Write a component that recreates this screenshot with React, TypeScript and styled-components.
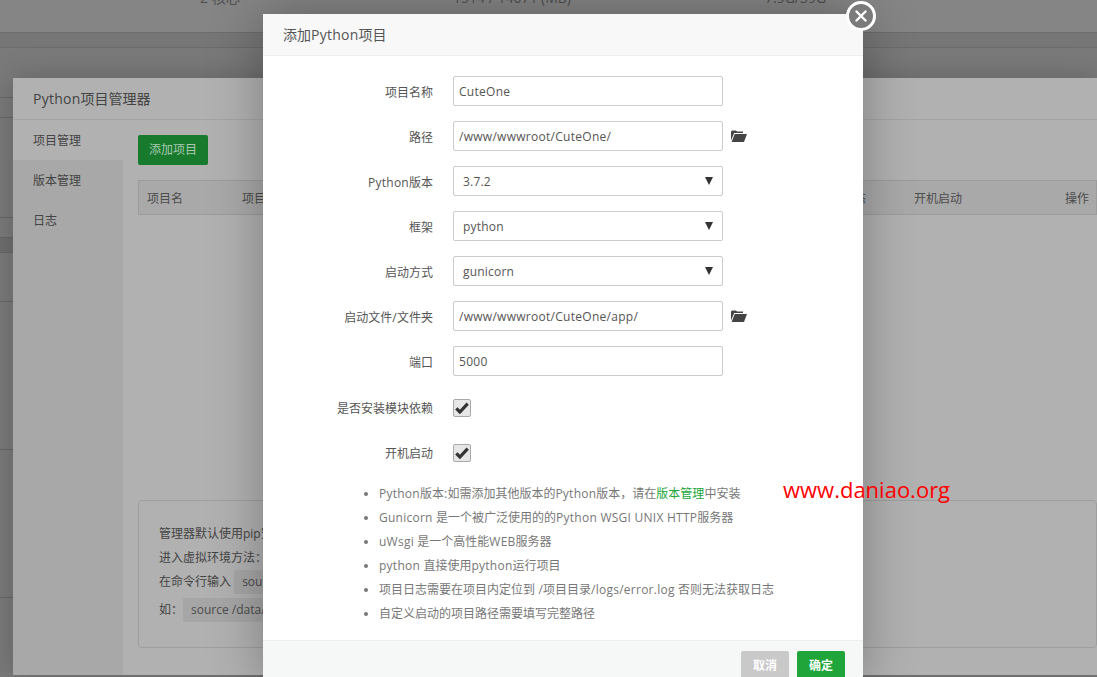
import React from 'react';
import styled, {createGlobalStyle} from 'styled-components';

const fontStack = '"Open Sans", "Noto Sans CJK SC", sans-serif';

const GlobalStyle = createGlobalStyle`
  html, body {
    margin: 0;
    height: 100%;
    overflow: hidden;
    background-color: #7a7a7a;
    font-family: ${fontStack};
    font-size: 12px;
    color: #555;
  }
  * {
    box-sizing: border-box;
  }
`;

const fields = [
  {label: '项目名称', value: 'CuteOne', kind: 'input'},
  {label: '路径', value: '/www/wwwroot/CuteOne/', kind: 'folder'},
  {label: 'Python版本', value: '3.7.2', kind: 'select'},
  {label: '框架', value: 'python', kind: 'select'},
  {label: '启动方式', value: 'gunicorn', kind: 'select'},
  {label: '启动文件/文件夹', value: '/www/wwwroot/CuteOne/app/', kind: 'folder'},
  {label: '端口', value: '5000', kind: 'input'},
];

const tips = [
  'Gunicorn 是一个被广泛使用的的Python WSGI UNIX HTTP服务器',
  'uWsgi 是一个高性能WEB服务器',
  'python 直接使用python运行项目',
  '项目日志需要在项目内定位到 /项目目录/logs/error.log 否则无法获取日志',
  '自定义启动的项目路径需要填写完整路径',
];

// heights of the rows of the page behind the manager window
const backRows = [
  {height: 50, dark: false},
  {height: 20, dark: false},
  {height: 100, dark: false},
  {height: 20, dark: false},
  {height: 15, dark: true},
  {height: 49, dark: false},
  {height: 148, dark: false},
  {height: 148, dark: false},
];

// the latin letters in the reference run a little wider than the cjk text around them
const Mixed: React.FC<{text: string}> = ({text}) => (
  <>
    {text.split(/([\x20-\x7e]+)/).map((part, index) => (
      index % 2 === 1 ? <Latin key={index}>{part}</Latin> : part
    ))}
  </>
);

const FolderIcon = () => (
  <FolderSvg viewBox="0 0 16 12" width="16" height="12">
    <path d="M0 10.5V1.4L1 .4h4l1 1.1h6v1.6H3.2z" fill="#444"/>
    <path d="M3.7 4H16l-3 8H.6z" fill="#444"/>
  </FolderSvg>
);

const CheckBox = () => (
  <Check>
    <svg viewBox="0 0 14 12" width="14" height="12">
      <path d="M1.3 6.4l3.6 3.6L12.7 1.6" fill="none" stroke="#333" strokeWidth="3.2"/>
    </svg>
  </Check>
);

export default function App() {
  return (
    <Page>
      <GlobalStyle/>
      <StatsRow>
        <span>2 核心</span>
        <span>1514 / 14071 (MB)</span>
        <span>7.9G/39G</span>
      </StatsRow>
      <TopBand/>
      {backRows.map((row, index) => <BackRow key={index} rowHeight={row.height} dark={row.dark}/>)}
      <Manager>
        <ManagerTitle><Mixed text="Python项目管理器"/></ManagerTitle>
        <ManagerBody>
          <SideMenu>
            <SideItem active>项目管理</SideItem>
            <SideItem>版本管理</SideItem>
            <SideItem>日志</SideItem>
          </SideMenu>
          <ManagerMain>
            <AddButton>添加项目</AddButton>
            <TableHead>
              <span>项目名</span>
              <span>项目路径</span>
              <span>状态</span>
              <span>开机启动</span>
              <HeadAction>操作</HeadAction>
            </TableHead>
            <TableSpace/>
            <NoticeBox>
              <NoticeLine>管理器默认使用pip安装模块</NoticeLine>
              <NoticeLine>进入虚拟环境方法：</NoticeLine>
              <NoticeLine>在命令行输入&nbsp;<Code>source /data/venv/bin/activate</Code></NoticeLine>
              <NoticeLine>如：<Code>source /data/venv/bin/activate</Code></NoticeLine>
            </NoticeBox>
          </ManagerMain>
        </ManagerBody>
      </Manager>
      <Modal>
        <ModalTitle><Mixed text="添加Python项目"/></ModalTitle>
        <CloseButton>
          <svg viewBox="0 0 12 12" width="12" height="12">
            <path d="M1.5 1.5l9 9M10.5 1.5l-9 9" stroke="#fff" strokeWidth="2.4" strokeLinecap="round"/>
          </svg>
        </CloseButton>
        <ModalForm>
          {fields.map((field) => (
            <FormRow key={field.label}>
              <FormLabel><Mixed text={field.label}/></FormLabel>
              {field.kind === 'select' ? (
                <SelectBox>
                  {field.value}
                  <SelectArrow/>
                </SelectBox>
              ) : (
                <TextInput readOnly value={field.value}/>
              )}
              {field.kind === 'folder' && <FolderIcon/>}
            </FormRow>
          ))}
          <CheckRow>
            <FormLabel>是否安装模块依赖</FormLabel>
            <CheckBox/>
          </CheckRow>
          <CheckRow>
            <FormLabel>开机启动</FormLabel>
            <CheckBox/>
          </CheckRow>
          <TipList>
            <li><Mixed text="Python版本:如需添加其他版本的Python版本，请在"/><TipLink>版本管理</TipLink>中安装</li>
            {tips.map((tip) => <li key={tip}><Mixed text={tip}/></li>)}
          </TipList>
        </ModalForm>
        <ModalFooter>
          <FooterButton variant="cancel">取消</FooterButton>
          <FooterButton variant="ok">确定</FooterButton>
        </ModalFooter>
      </Modal>
      <Watermark>www.daniao.org</Watermark>
    </Page>
  );
}

const Latin = styled.span`
  letter-spacing: 0.25px;
`;

const Page = styled.div`
  width: 1097px;
  height: 677px;
  overflow: hidden;
  position: relative;
  background-color: #7a7a7a;
`;

const StatsRow = styled.div`
  height: 45px;
  margin-top: -12px;
  padding-left: 200px;
  display: grid;
  grid-template-columns: 253px 312px 1fr;
  background-color: #858585;
  border-bottom: 1px solid #6c6c6c;
  color: #4f4f4f;
  font-size: 14px;
  line-height: 20px;
`;

const TopBand = styled.div`
  height: 15px;
  background-color: #767676;
  border-bottom: 1px solid #6c6c6c;
`;

const BackRow = styled.div<{rowHeight: number; dark: boolean}>`
  height: ${(props) => props.rowHeight}px;
  background-color: ${(props) => props.dark ? '#6e6e6e' : 'transparent'};
  border-bottom: 1px solid #666;
`;

const Manager = styled.div`
  position: absolute;
  left: 13px;
  top: 78px;
  width: 1084px;
  height: 597px;
  background-color: #b1b1b1;
  box-shadow: 0 0 30px rgba(0, 0, 0, 0.2);
  display: flex;
  flex-direction: column;
`;

const ManagerTitle = styled.div`
  height: 42px;
  padding-left: 20px;
  line-height: 41px;
  font-size: 14px;
  color: #444;
  border-bottom: 1px solid #a4a4a4;
`;

const ManagerBody = styled.div`
  flex: 1;
  display: flex;
`;

const SideMenu = styled.div`
  width: 110px;
  background-color: #a8a8a8;
`;

const SideItem = styled.div<{active?: boolean}>`
  height: 40px;
  padding-left: 20px;
  line-height: 42px;
  color: #444;
  background-color: ${(props) => props.active ? '#b1b1b1' : 'transparent'};
`;

const ManagerMain = styled.div`
  flex: 1;
  padding: 15px 0 27px 15px;
  display: flex;
  flex-direction: column;
  align-items: flex-start;
`;

const AddButton = styled.div`
  width: 70px;
  height: 30px;
  line-height: 30px;
  text-align: center;
  border-radius: 2px;
  background-color: #177a2d;
  color: #a9c9b0;
`;

const TableHead = styled.div`
  margin-top: 15px;
  width: 100%;
  height: 35px;
  padding: 0 7px 0 8px;
  display: grid;
  grid-template-columns: 95px 600px 72px 1fr auto;
  align-items: center;
  background-color: #a9a9a9;
  border: 1px solid #9c9c9c;
  color: #4c4c4c;
`;

const HeadAction = styled.span`
  text-align: right;
`;

const TableSpace = styled.div`
  flex: 1;
`;

const NoticeBox = styled.div`
  width: 100%;
  height: 148px;
  padding: 21px 20px 0;
  border: 1px solid #9e9e9e;
  border-radius: 4px;
  color: #444;
`;

const NoticeLine = styled.div`
  height: 24px;
  line-height: 24px;
  white-space: nowrap;

  &:last-child {
    margin-top: 4px;
  }
`;

const Code = styled.span`
  display: inline-block;
  padding: 0 8px;
  background-color: #a6a6a6;
  color: #4c4c4c;
`;

const Modal = styled.div`
  position: absolute;
  left: 263px;
  top: 14px;
  width: 600px;
  height: 670px;
  background-color: #fff;
  box-shadow: 0 0 50px rgba(0, 0, 0, 0.3);
  display: flex;
  flex-direction: column;
`;

const ModalTitle = styled.div`
  height: 42px;
  padding-left: 20px;
  line-height: 41px;
  font-size: 14px;
  color: #555;
  background-color: #f8f8f8;
  border-bottom: 1px solid #eee;
`;

const CloseButton = styled.div`
  position: absolute;
  right: -13px;
  top: -13px;
  width: 30px;
  height: 30px;
  border-radius: 50%;
  border: 3px solid #fff;
  background-color: #7b7b7b;
  display: flex;
  align-items: center;
  justify-content: center;
`;

const ModalForm = styled.div`
  flex: 1;
  padding-top: 20px;
  display: flex;
  flex-direction: column;
`;

const FormRow = styled.div`
  height: 30px;
  margin-bottom: 15px;
  display: flex;
  align-items: center;
`;

const FormLabel = styled.div`
  width: 170px;
  margin-right: 20px;
  padding-top: 2px;
  text-align: right;
  color: #555;
`;

const CheckRow = styled(FormRow)`
  height: 34px;
  margin-bottom: 11px;

  ${FormLabel} {
    padding-top: 0;
  }
`;

const fieldBox = `
  width: 270px;
  height: 30px;
  border: 1px solid #ccc;
  border-radius: 2px;
  background-color: #fff;
  font-family: ${fontStack};
  font-size: 12px;
  color: #555;
`;

const TextInput = styled.input`
  ${fieldBox}
  padding: 0 5px;
  letter-spacing: 0.28px;
  outline: none;
`;

const SelectBox = styled.div`
  ${fieldBox}
  position: relative;
  padding-left: 9px;
  letter-spacing: 0.2px;
  line-height: 30px;
`;

const SelectArrow = styled.span`
  position: absolute;
  right: 9px;
  top: 10px;
  border-left: 4px solid transparent;
  border-right: 4px solid transparent;
  border-top: 8px solid #333;
`;

const FolderSvg = styled.svg`
  margin-left: 8px;
`;

const Check = styled.div`
  width: 18px;
  height: 18px;
  border: 1px solid #aaa;
  border-radius: 2px;
  background-color: #e6e6e6;
  display: flex;
  align-items: center;
  justify-content: center;
`;

const TipList = styled.ul`
  margin: 1px 0 0;
  padding: 0 0 0 116px;
  list-style: disc;
  color: #777;
  line-height: 24px;
`;

const TipLink = styled.span`
  color: #20a53a;
`;

const ModalFooter = styled.div`
  height: 44px;
  padding: 10px 18px 0 0;
  display: flex;
  justify-content: flex-end;
  gap: 8px;
  background-color: #f6f8f8;
  border-top: 1px solid #eee;
`;

const FooterButton = styled.div<{variant: 'cancel' | 'ok'}>`
  width: 48px;
  height: 30px;
  line-height: 30px;
  text-align: center;
  border-radius: 2px;
  font-weight: 700;
  color: #fff;
  background-color: ${(props) => props.variant === 'ok' ? '#20a53a' : '#c9c9c9'};
`;

const Watermark = styled.div`
  position: absolute;
  left: 783px;
  top: 474px;
  color: #ff0000;
  font-family: "Open Sans", sans-serif;
  font-size: 22px;
  line-height: 30px;
  white-space: nowrap;
`;
